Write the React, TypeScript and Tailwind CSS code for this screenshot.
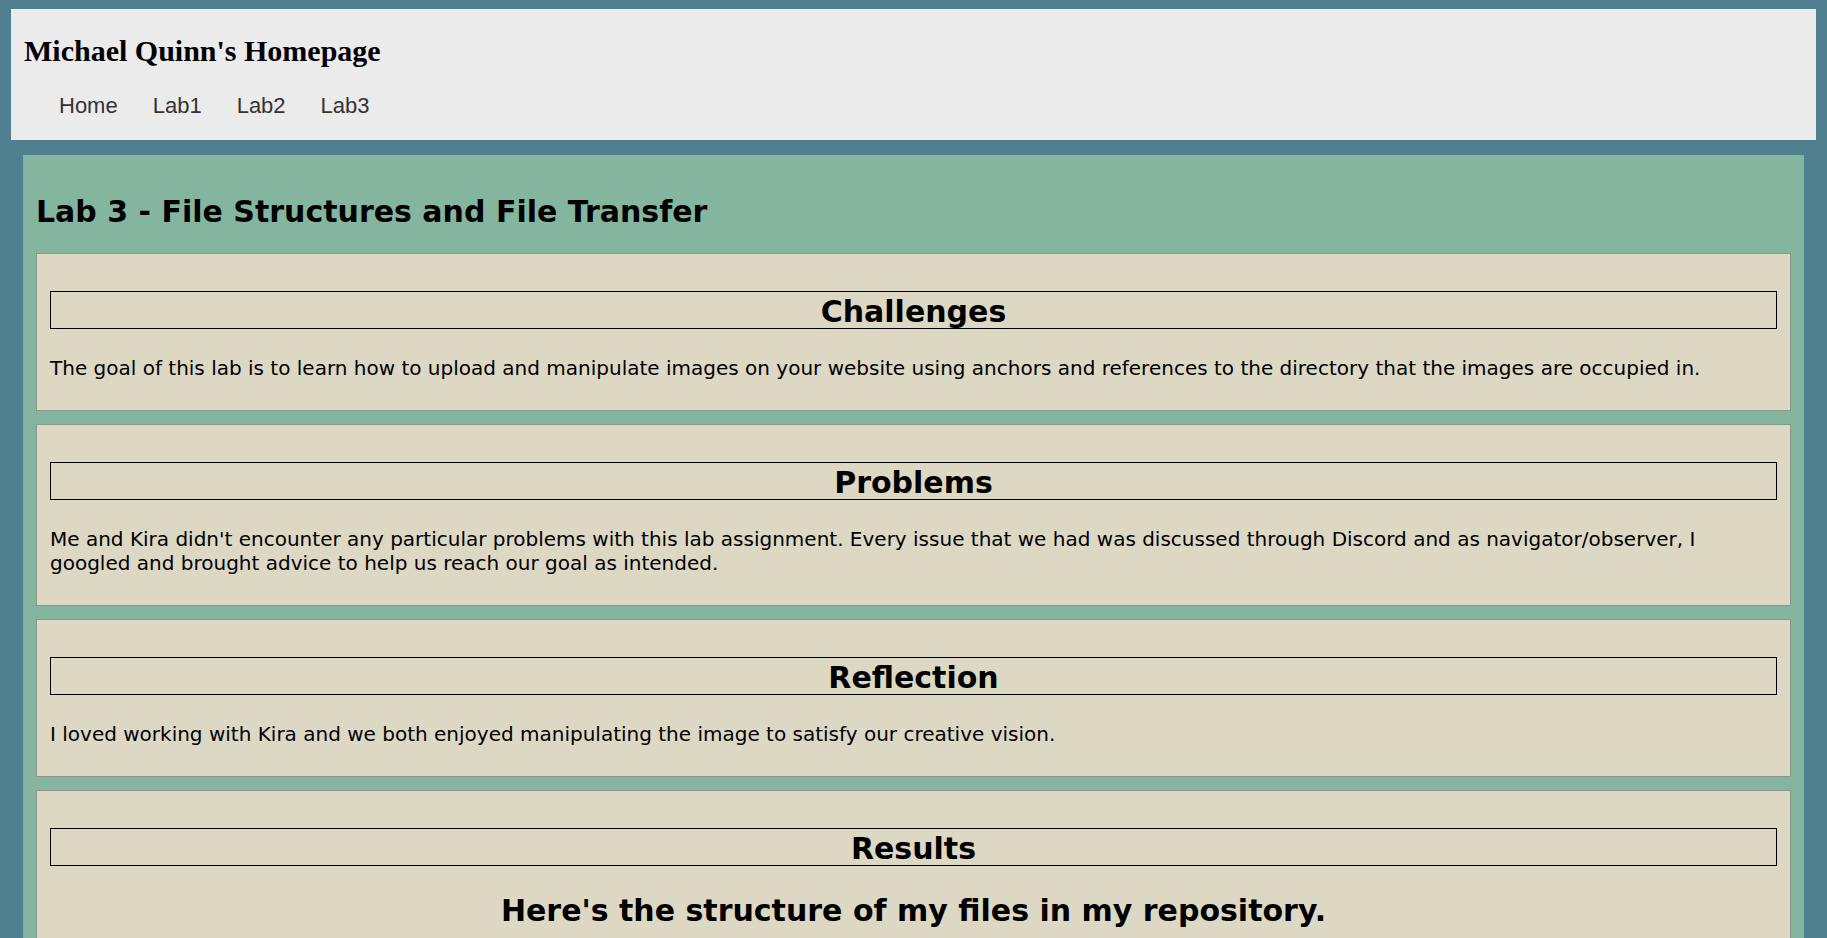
const sections = [
  {
    title: 'Challenges',
    text: 'The goal of this lab is to learn how to upload and manipulate images on your website using anchors and references to the directory that the images are occupied in.',
  },
  {
    title: 'Problems',
    text: "Me and Kira didn't encounter any particular problems with this lab assignment. Every issue that we had was discussed through Discord and as navigator/observer, I googled and brought advice to help us reach our goal as intended.",
  },
  {
    title: 'Reflection',
    text: 'I loved working with Kira and we both enjoyed manipulating the image to satisfy our creative vision.',
  },
];

const navLinks = ['Home', 'Lab1', 'Lab2', 'Lab3'];

function SectionHeading({ children }: { children: string }) {
  return (
    <h2 className="border border-black pt-[4px] text-center text-[30px] font-bold leading-[32px]">{children}</h2>
  );
}

export default function App() {
  return (
    <div className="min-h-screen bg-[#50808f] px-[11px] pt-[9px] font-['DejaVu_Sans',Verdana,sans-serif] text-black">
      <header className="bg-[#ebebeb] pb-[22px] pl-[13px] pt-[24px]">
        <h1 className="font-['Liberation_Serif','Times_New_Roman',serif] text-[30px] font-bold leading-[36px]">
          Michael Quinn's Homepage
        </h1>
        <nav className="ml-[35px] mt-[25px] flex gap-[35px] font-['Liberation_Sans',Arial,sans-serif] text-[22px] leading-[24px] text-[#333]">
          {navLinks.map((link) => (
            <a key={link} href="#">
              {link}
            </a>
          ))}
        </nav>
      </header>

      <main className="mx-[12px] mt-[15px] bg-[#84b59f] px-[13px] pb-[13px] pt-[39px]">
        <h2 className="text-[30px] font-bold leading-[35px]">Lab 3 - File Structures and File Transfer</h2>

        <div className="mt-[24px] flex flex-col gap-[13px]">
          {sections.map((section) => (
            <section key={section.title} className="border border-[#8a968a] bg-[#ddd8c4] px-[13px] pb-[30px] pt-[37px]">
              <SectionHeading>{section.title}</SectionHeading>
              <p className="mt-[27px] text-[20px] leading-[24px]">{section.text}</p>
            </section>
          ))}

          <section className="border border-[#8a968a] bg-[#ddd8c4] px-[13px] pb-[30px] pt-[37px]">
            <SectionHeading>Results</SectionHeading>
            <h3 className="mt-[27px] text-center text-[30px] font-bold leading-[35px]">
              Here's the structure of my files in my repository.
            </h3>
            <div className="mx-auto mt-[20px] h-[300px] w-[600px] bg-[#cfc9b3]" />
          </section>
        </div>
      </main>
    </div>
  );
}
